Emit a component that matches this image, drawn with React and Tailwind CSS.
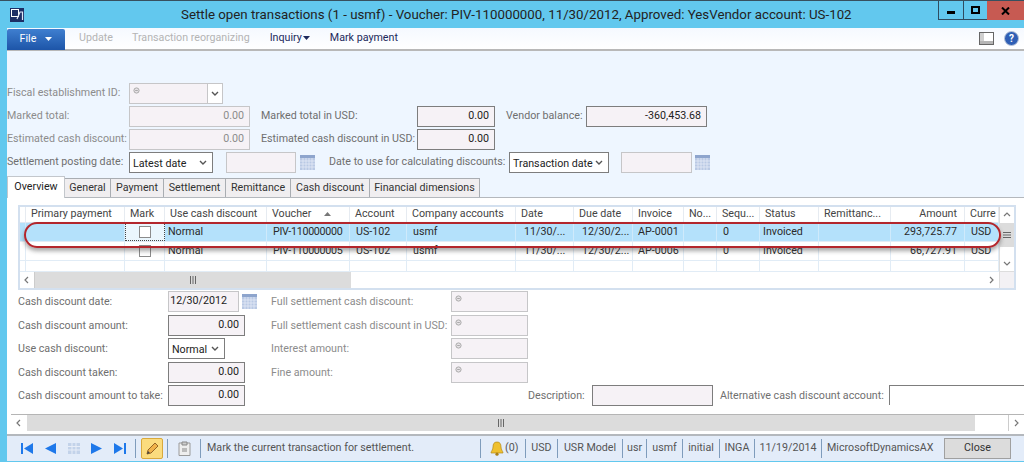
const labelCls = 'text-[#6f6f6f] whitespace-nowrap';
const dimCls = 'text-[#8c8c8c] whitespace-nowrap';

function XDot() {
  return (
    <svg className="absolute left-[3px] top-[3px]" width="7" height="7" viewBox="0 0 7 7">
      <circle cx="3.5" cy="3.5" r="2.6" fill="#e6e2e6" stroke="#a9a9a9" />
      <path d="M2.2 3.5h2.6" stroke="#a9a9a9" />
    </svg>
  );
}

function Chevron() {
  return (
    <svg width="8" height="6" viewBox="0 0 8 6">
      <path d="M1 1l3 3 3-3" fill="none" stroke="#555" strokeWidth="1.4" />
    </svg>
  );
}

function CalendarIcon() {
  return (
    <svg width="15" height="15" viewBox="0 0 15 15">
      <rect width="15" height="15" fill="#b9c9e4" />
      <rect width="15" height="3" fill="#8ea5cd" />
      <path d="M0 6h15M0 9h15M0 12h15M3 3v12M6 3v12M9 3v12M12 3v12" stroke="#e4ebf6" strokeWidth="0.8" />
    </svg>
  );
}

function Field({ w, value, dark, disabled, children }) {
  const border = dark ? 'border-[#7d7d7d]' : 'border-[#c6c6c8]';
  return (
    <div className={`relative h-[21px] ${w} shrink-0 bg-[#f6f2f6] border ${border} flex items-center justify-end pr-[5px] ${disabled ? 'text-[#8c8c8c]' : 'text-[#222]'}`}>
      {children}
      {value}
    </div>
  );
}

function Select({ w, value }) {
  return (
    <div className={`h-[21px] ${w} shrink-0 bg-white border border-[#7d7d7d] flex items-center justify-between pl-[3px] pr-[5px] text-[#222] whitespace-nowrap`}>
      <span className="pt-[3px]">{value}</span>
      <Chevron />
    </div>
  );
}

function TopForm() {
  return (
    <div className="h-[125px] pt-[32px] text-[10.7px] leading-none">
      <div className="h-[23px] flex items-start">
        <span className={`w-[122px] pt-[5px] ${dimCls}`}>Fiscal establishment ID:</span>
        <div className="relative h-[21px] w-[94px] bg-[#f6f2f6] border border-[#c6c6c8] flex justify-end">
          <XDot />
          <div className="w-[15px] bg-white border-l border-[#c6c6c8] flex items-center justify-center">
            <Chevron />
          </div>
        </div>
      </div>
      <div className="h-[23px] flex items-start">
        <span className={`w-[122px] pt-[5px] ${dimCls}`}>Marked total:</span>
        <Field w="w-[121px]" value="0.00" disabled />
        <span className={`ml-[11px] w-[156px] pt-[5px] ${labelCls}`}>Marked total in USD:</span>
        <Field w="w-[78px]" value="0.00" dark />
        <span className={`ml-[11px] w-[80px] pt-[5px] ${labelCls}`}>Vendor balance:</span>
        <Field w="w-[121px]" value="-360,453.68" dark />
      </div>
      <div className="h-[23px] flex items-start">
        <span className={`w-[122px] pt-[5px] ${dimCls}`}>Estimated cash discount:</span>
        <Field w="w-[121px]" value="0.00" disabled />
        <span className={`ml-[11px] w-[156px] pt-[5px] ${labelCls}`}>Estimated cash discount in USD:</span>
        <Field w="w-[78px]" value="0.00" dark />
      </div>
      <div className="h-[23px] flex items-start">
        <span className={`w-[122px] pt-[5px] ${labelCls}`}>Settlement posting date:</span>
        <Select w="w-[84px]" value="Latest date" />
        <Field w="w-[70px] ml-[13px]" />
        <span className="ml-[4px] mt-[3px]"><CalendarIcon /></span>
        <span className={`ml-[14px] w-[180px] pt-[5px] ${labelCls}`}>Date to use for calculating discounts:</span>
        <Select w="w-[100px]" value="Transaction date" />
        <Field w="w-[71px] ml-[12px]" />
        <span className="ml-[3px] mt-[3px]"><CalendarIcon /></span>
      </div>
    </div>
  );
}

const tabs = [
  ['Overview', 'w-[58px]'],
  ['General', 'w-[46px]'],
  ['Payment', 'w-[53px]'],
  ['Settlement', 'w-[62px]'],
  ['Remittance', 'w-[65px]'],
  ['Cash discount', 'w-[79px]'],
  ['Financial dimensions', 'w-[110px]'],
];

function Tabs() {
  return (
    <div className="h-[22px] flex items-end border-b border-[#b4b8bd] text-[10.7px] leading-none">
      {tabs.map(([name, w], i) => (
        <div
          key={name}
          className={
            i === 0
              ? `${w} h-[22px] -mb-px bg-white border border-b-0 border-[#c3c7cc] flex items-center justify-center text-[#222]`
              : `${w} h-[19px] bg-[#f0eef0] border-r border-t border-[#a9adb2] flex items-center justify-center text-[#333]`
          }
        >
          {name}
        </div>
      ))}
    </div>
  );
}

const colTemplate = 'grid grid-cols-[6px_99px_40px_102px_83px_57px_109px_58px_59px_51px_33px_43px_59px_72px_74px_34px]';

const headers = [
  ['', ''],
  ['Primary payment', ''],
  ['Mark', ''],
  ['Use cash discount', ''],
  ['Voucher', ''],
  ['Account', ''],
  ['Company accounts', ''],
  ['Date', ''],
  ['Due date', ''],
  ['Invoice', ''],
  ['No...', ''],
  ['Sequ...', ''],
  ['Status', ''],
  ['Remittanc...', ''],
  ['Amount', 'justify-end'],
  ['Curre', ''],
];

function GridHeader() {
  return (
    <div className={`${colTemplate} h-[16px] items-stretch text-[#444] border-b border-[#dfe8f2]`}>
      {headers.map(([h, align], i) => (
        <div key={i} className={`flex items-center ${align} ${align ? 'pr-[7px]' : 'pl-[5px]'} border-r border-[#e6ebf1] overflow-hidden whitespace-nowrap`}>
          {h}
          {h === 'Voucher' && (
            <svg className="ml-[13px]" width="7" height="4" viewBox="0 0 7 4">
              <path d="M0 4l3.5-4 3.5 4z" fill="#777" />
            </svg>
          )}
        </div>
      ))}
    </div>
  );
}

function GridRow({ selected, cells }) {
  const line = selected ? 'border-[#cfeafb]' : 'border-[#e1ecf6]';
  return (
    <div className={`${colTemplate} h-[19.5px] text-[#2a2a2a] ${selected ? 'bg-[#b4e1fb]' : 'bg-white'} border-b border-[#e1ecf6]`}>
      <div className={`border-r ${line}`} />
      <div className={`border-r ${line}`} />
      <div className={`flex items-center justify-center ${selected ? 'bg-[#eaf6fd] border border-dotted border-[#444]' : `border-r ${line}`}`}>
        <span className="w-[12px] h-[12px] bg-white border border-[#8b8b8b]" />
      </div>
      {cells.map(([text, pad], i) => (
        <div key={i} className={`flex items-center ${pad} border-r ${line} overflow-hidden whitespace-nowrap`}>
          {text}
        </div>
      ))}
    </div>
  );
}

const row1 = [
  ['Normal', 'pl-[3px]'], ['PIV-110000000', 'pl-[6px] tracking-[-0.3px]'], ['US-102', 'pl-[6px]'], ['usmf', 'pl-[6px]'], ['11/30/...', 'pl-[8px]'],
  ['12/30/2...', 'pl-[8px]'], ['AP-0001', 'pl-[5px]'], ['', ''], ['0', 'pl-[6px]'],
  ['Invoiced', 'pl-[3px]'], ['', ''], ['293,725.77', 'justify-end pr-[7px]'], ['USD', 'pl-[6px]'],
];
const row2 = [
  ['Normal', 'pl-[3px]'], ['PIV-110000005', 'pl-[6px] tracking-[-0.3px]'], ['US-102', 'pl-[6px]'], ['usmf', 'pl-[6px]'], ['11/30/...', 'pl-[8px]'],
  ['12/30/2...', 'pl-[8px]'], ['AP-0006', 'pl-[5px]'], ['', ''], ['0', 'pl-[6px]'],
  ['Invoiced', 'pl-[3px]'], ['', ''], ['66,727.91', 'justify-end pr-[7px]'], ['USD', 'pl-[6px]'],
];

function ScrollArrow({ dir }) {
  const d = { left: 'M5 1L2 4l3 3', right: 'M2 1l3 3-3 3', up: 'M1 5l3-3 3 3', down: 'M1 2l3 3 3-3' }[dir];
  return (
    <svg width="8" height="8" viewBox="0 0 8 8">
      <path d={d} fill="none" stroke="#777" strokeWidth="1.2" />
    </svg>
  );
}

function Grip({ vertical }) {
  return (
    <svg width="8" height="8" viewBox="0 0 8 8">
      <path d={vertical ? 'M0 1.5h8M0 4h8M0 6.5h8' : 'M1.5 0v8M4 0v8M6.5 0v8'} stroke="#666" />
    </svg>
  );
}

function DataGrid() {
  return (
    <div className="relative mt-[7px] ml-[11px] mr-[8px] h-[85px] border-2 border-[#d3e0ef] flex text-[10.7px] leading-none bg-white">
      <div className="flex-1 min-w-0 flex flex-col">
        <GridHeader />
        <GridRow selected cells={row1} />
        <GridRow cells={row2} />
        <div className={`${colTemplate} h-[11px] border-b border-[#e1ecf6]`}>
          {headers.map((_, i) => (
            <div key={i} className="border-r border-[#e1ecf6]" />
          ))}
        </div>
        <div className="h-[16px] flex">
          <div className="w-[15px] flex items-center justify-center bg-white border-r border-[#ccc]"><ScrollArrow dir="left" /></div>
          <div className="w-[316px] bg-[#dcdcdc] flex items-center justify-center"><Grip /></div>
          <div className="flex-1" />
          <div className="w-[15px] flex items-center justify-center"><ScrollArrow dir="right" /></div>
        </div>
      </div>
      <div className="w-[15px] flex flex-col border-l border-[#ddd]">
        <div className="h-[16px] flex items-center justify-center"><ScrollArrow dir="up" /></div>
        <div className="h-[24px] bg-[#dcdcdc] flex items-center justify-center"><Grip vertical /></div>
        <div className="flex-1" />
        <div className="h-[16px] flex items-center justify-center border-b border-[#ddd]"><ScrollArrow dir="down" /></div>
        <div className="h-[16px] bg-[#f3f1f4]" />
      </div>
    </div>
  );
}

function DetailRow({ label, children, right, last }) {
  return (
    <div className="h-[23.5px] flex items-start">
      <span className={`w-[150px] pt-[6px] ${labelCls}`}>{label}</span>
      <div className="w-[103px] flex items-start shrink-0">{children}</div>
      {right && <span className={`w-[180px] pt-[6px] ${dimCls}`}>{right}</span>}
      {right && (
        <Field w="w-[77px]" disabled>
          <XDot />
        </Field>
      )}
      {last}
    </div>
  );
}

function Details() {
  return (
    <div className="mt-[1px] pl-[11px] text-[10.7px] leading-none">
      <DetailRow label="Cash discount date:" right="Full settlement cash discount:">
        <Field w="w-[71px]" value={<span className="pr-[6px]">12/30/2012</span>} />
        <span className="ml-[3px] mt-[3px]"><CalendarIcon /></span>
      </DetailRow>
      <DetailRow label="Cash discount amount:" right="Full settlement cash discount in USD:">
        <Field w="w-[77px]" value="0.00" dark />
      </DetailRow>
      <DetailRow label="Use cash discount:" right="Interest amount:">
        <Select w="w-[57px]" value="Normal" />
      </DetailRow>
      <DetailRow label="Cash discount taken:" right="Fine amount:">
        <Field w="w-[77px]" value="0.00" dark />
      </DetailRow>
      <DetailRow
        label="Cash discount amount to take:"
        last={
          <div className="ml-[257px] flex items-start">
            <span className={`w-[64px] pt-[6px] ${labelCls}`}>Description:</span>
            <Field w="w-[121px]" dark />
            <span className={`ml-[7px] w-[169px] pt-[6px] ${labelCls}`}>Alternative cash discount account:</span>
            <div className="w-[135px] h-[20px] bg-white border-t border-l border-[#7d7d7d]" />
          </div>
        }
      >
        <Field w="w-[77px]" value="0.00" dark />
      </DetailRow>
    </div>
  );
}

function NavTriangle({ left, bar }) {
  return (
    <svg width="12" height="11" viewBox="0 0 12 11">
      {left ? <path d={bar ? 'M3 5.5L12 0v11z' : 'M1 5.5L12 0v11z'} fill="#1e78ea" /> : <path d={bar ? 'M9 5.5L0 0v11z' : 'M11 5.5L0 0v11z'} fill="#1e78ea" />}
      {bar && <rect x={left ? 0 : 10} width="2" height="11" fill="#1e78ea" />}
    </svg>
  );
}

function Sep({ className = '' }) {
  return <span className={`w-px h-[19px] bg-[#7f9cbc] shrink-0 ${className}`} />;
}

const statusItems = [
  ['USD', 'w-[31px]'],
  ['USR Model', 'w-[64px]'],
  ['usr', 'w-[23px]'],
  ['usmf', 'w-[35px]'],
  ['initial', 'w-[36px]'],
  ['INGA', 'w-[34px]'],
  ['11/19/2014', 'w-[66px]'],
];

function StatusBar() {
  return (
    <div className="h-[27px] mt-[3px] border-t-2 border-[#b4b8bd] bg-[#e3ecf9] flex items-center text-[10.7px] leading-none text-[#555]">
      <div className="w-[128px] pl-[14px] flex items-center justify-between pr-[9px] shrink-0">
        <NavTriangle left bar />
        <NavTriangle left />
        <svg width="12" height="11" viewBox="0 0 12 11">
          <rect width="12" height="11" fill="#c3d3ea" />
          <path d="M0 3.5h12M0 7h12M4 0v11M8 0v11" stroke="#e8eef8" />
        </svg>
        <NavTriangle />
        <NavTriangle bar />
      </div>
      <Sep />
      <div className="ml-[5px] w-[22px] h-[21px] bg-[#fbdc7e] border border-[#d9a93c] rounded-[2px] flex items-center justify-center shrink-0">
        <svg width="15" height="15" viewBox="0 0 15 15">
          <path d="M2 13l1-4 7-7 3 3-7 7z" fill="#f0b24a" stroke="#8a5a1e" strokeWidth="0.9" />
          <path d="M2 13l1-3 2 2z" fill="#444" />
        </svg>
      </div>
      <Sep className="ml-[4px]" />
      <div className="ml-[10px] w-[22px] shrink-0">
        <svg width="13" height="15" viewBox="0 0 13 15">
          <path d="M1 2h11v12.5H1z" fill="#eee" stroke="#9a9a9a" />
          <path d="M4 1h5v3H4z" fill="#ccc" stroke="#888" />
          <path d="M4 7h5v4H4z" fill="#bbb" />
        </svg>
      </div>
      <Sep />
      <span className="ml-[6px] flex-1 whitespace-nowrap">Mark the current transaction for settlement.</span>
      <Sep />
      <div className="w-[44px] pl-[9px] flex items-center gap-[1px] shrink-0">
        <svg width="14" height="15" viewBox="0 0 14 15">
          <path d="M7 1c3 0 4 2 4 5 0 3 2 4 2 6H1c0-2 2-3 2-6 0-3 1-5 4-5z" fill="#efc02f" stroke="#b58a17" strokeWidth="0.7" />
          <circle cx="7" cy="13.2" r="1.6" fill="#a97f17" />
        </svg>
        <span>(0)</span>
      </div>
      {statusItems.map(([name, w]) => (
        <div key={name} className="flex items-center shrink-0">
          <Sep />
          <span className={`${w} text-center`}>{name}</span>
        </div>
      ))}
      <Sep />
      <span className="w-[122px] pl-[5px] whitespace-nowrap shrink-0">MicrosoftDynamicsAX</span>
      <div className="w-[67px] h-[21px] bg-[#dcdcdc] border border-[#a0a0a0] flex items-center justify-center text-[#333] shrink-0">
        Close
      </div>
      <div className="w-[13px] shrink-0" />
    </div>
  );
}

export default function App() {
  return (
    <div className="relative w-[1024px] h-[462px] overflow-hidden bg-[#62c8ee] border-t border-[#37505f] font-['Roboto',sans-serif] text-[#333]">
      {/* Title bar */}
      <div className="relative h-[27px] flex items-center pl-[10px]">
        <svg width="14" height="14" viewBox="0 0 14 14">
          <rect width="14" height="14" fill="#1d2f66" />
          <rect x="1.5" y="1.5" width="7" height="7" fill="none" stroke="#fff" />
          <path d="M7 11l3-7h2.5v8" fill="none" stroke="#dfe7f5" strokeWidth="1.2" />
        </svg>
        <span className="ml-[157px] text-[13.3px] leading-none text-[#222] whitespace-nowrap">
          Settle open transactions (1 - usmf) - Voucher: PIV-110000000, 11/30/2012, Approved: YesVendor account: US-102
        </span>
        <div className="absolute right-0 top-0 h-[19px] flex">
          <div className="w-[25px] border-l border-b border-[#2f4c60] flex items-center justify-center">
            <span className="w-[8px] h-[3px] mt-[5px] bg-black" />
          </div>
          <div className="w-[24px] border-l border-b border-[#2f4c60] flex items-center justify-center">
            <span className="w-[9px] h-[8px] border-2 border-black" />
          </div>
          <div className="w-[37px] bg-[#c75a52] flex items-center justify-center">
            <svg width="9" height="8" viewBox="0 0 9 8">
              <path d="M1 0.5l7 7M8 0.5l-7 7" stroke="#000" strokeWidth="2" />
            </svg>
          </div>
        </div>
      </div>

      <div className="ml-[7px] bg-white">
        {/* Ribbon */}
        <div className="h-[23px] flex items-center bg-gradient-to-b from-[#f5f9ff] to-white border-b-2 border-[#b8b8b8] text-[10.7px] leading-none">
          <div className="w-[58px] h-[21px] mt-[1px] bg-gradient-to-b from-[#3f7fd0] to-[#1d55a8] rounded-t-[2px] flex items-center justify-center gap-[9px] text-white">
            <span>File</span>
            <svg width="7" height="4" viewBox="0 0 7 4"><path d="M0 0h7L3.5 4z" fill="#fff" /></svg>
          </div>
          <span className="ml-[14px] text-[#b4b4b4]">Update</span>
          <span className="ml-[19px] text-[#b4b4b4]">Transaction reorganizing</span>
          <span className="ml-[20px] text-[#1d2a5c] flex items-center gap-[1px]">
            Inquiry
            <svg width="7" height="4" viewBox="0 0 7 4"><path d="M0 0h7L3.5 4z" fill="#1d2a5c" /></svg>
          </span>
          <span className="ml-[20px] text-[#1d2a5c]">Mark payment</span>
          <div className="ml-auto mr-[5px] flex items-center gap-[10px]">
            <svg width="15" height="13" viewBox="0 0 15 13">
              <rect x="0.5" y="0.5" width="14" height="12" fill="#fff" stroke="#666" />
              <rect x="1" y="1" width="4" height="8" fill="#cfcfcf" />
              <rect x="1" y="9" width="13" height="3" fill="#b5b5b5" />
            </svg>
            <svg width="15" height="15" viewBox="0 0 15 15">
              <circle cx="7.5" cy="7.5" r="7" fill="#2f5fb5" stroke="#b8c4d8" />
              <text x="7.5" y="11" textAnchor="middle" fontSize="10" fontWeight="700" fill="#fff">?</text>
            </svg>
          </div>
        </div>

        {/* Form header and tabs */}
        <div className="bg-[#eef6ff]">
          <TopForm />
          <Tabs />
        </div>

        {/* Tab page */}
        <div className="bg-white h-[233px] flex flex-col">
          <DataGrid />
          <Details />
          <div className="mt-auto h-[17px] ml-[4px] flex bg-[#dcdcdc] border-t border-[#b5b5b5]">
            <div className="w-[16px] bg-white flex items-center justify-center"><ScrollArrow dir="left" /></div>
            <div className="flex-1 flex items-center justify-center"><Grip /></div>
            <div className="w-[33px] bg-white" />
            <div className="w-[16px] bg-white flex items-center justify-center border-l border-[#ccc]"><ScrollArrow dir="right" /></div>
          </div>
        </div>

        <StatusBar />
      </div>

      {/* Red highlight drawn over the grid */}
      <div className="absolute left-[24px] top-[221px] w-[977px] h-[26px] rounded-full border-2 border-[#b3262c] shadow-[0_3px_4px_rgba(60,60,60,0.45)]" />
    </div>
  );
}
